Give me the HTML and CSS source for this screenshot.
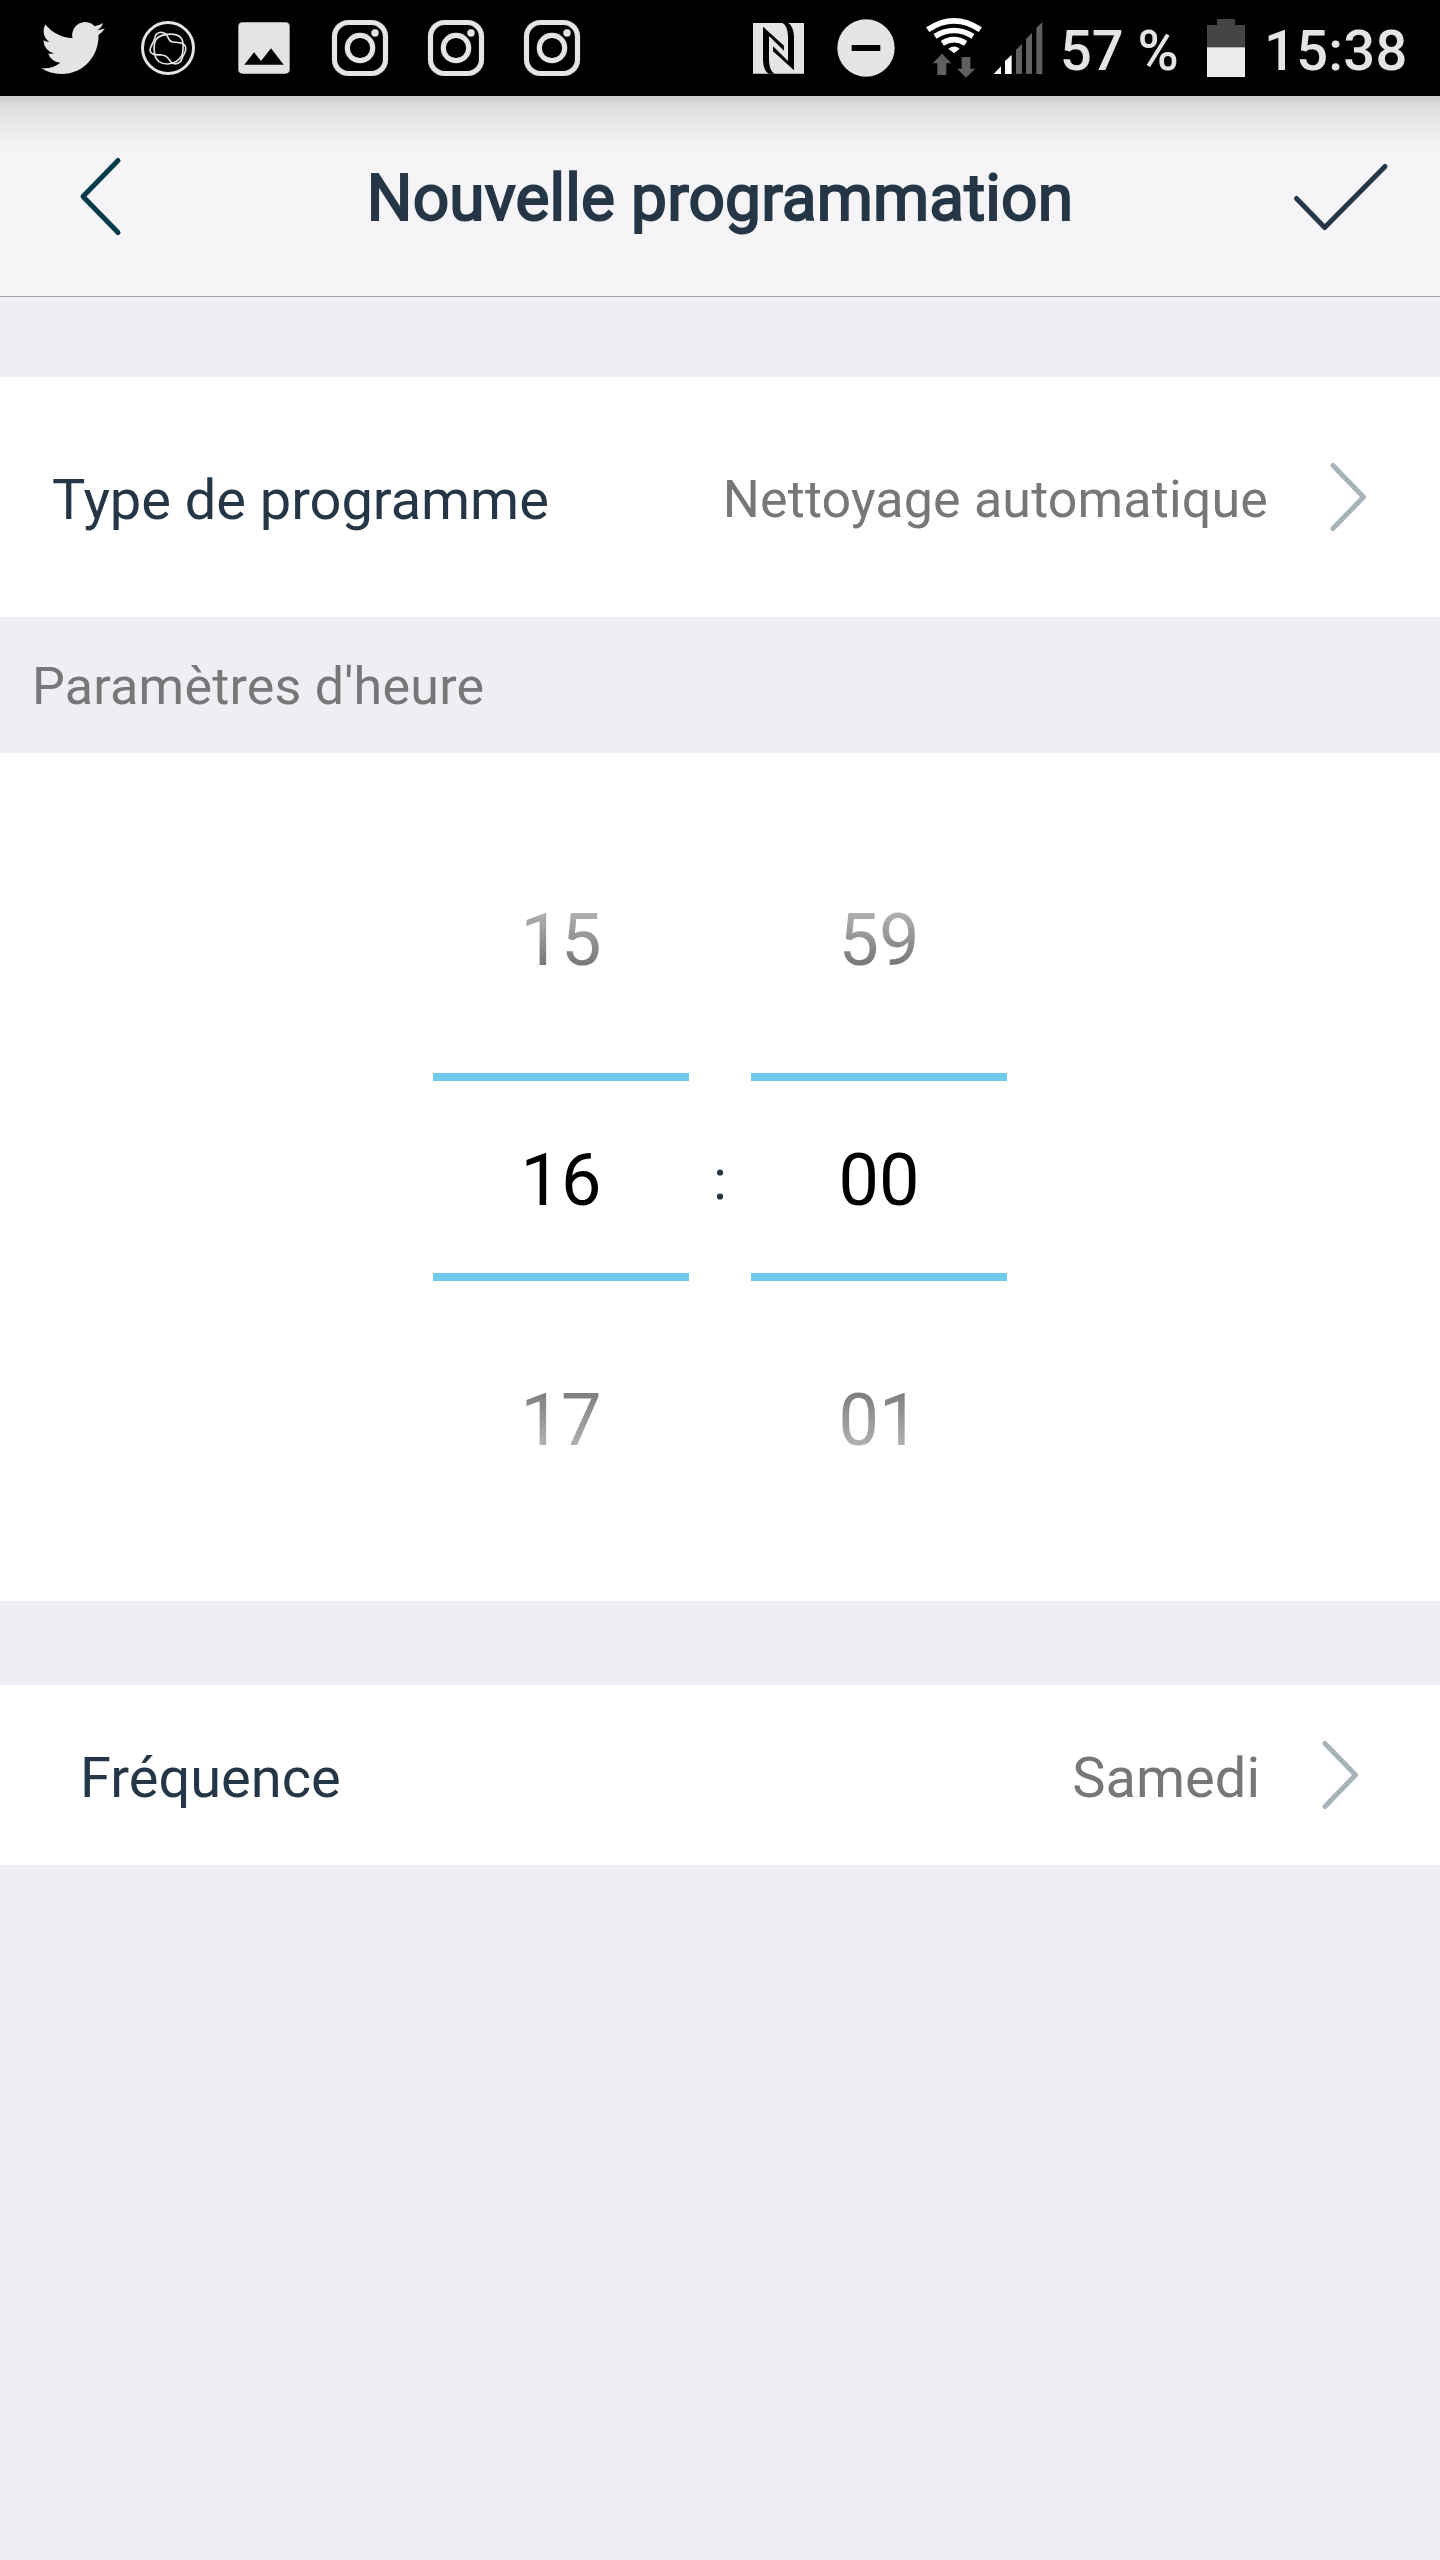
FILE: index.html
```html
<!DOCTYPE html>
<html lang="fr">
<head>
<meta charset="utf-8">
<title>Nouvelle programmation</title>
<link rel="stylesheet" href="styles.css">
</head>
<body>
<div class="status">
  <div class="notifications">
    <svg width="96" height="96" viewBox="24 0 96 96"><path fill="#e4e4e4" transform="translate(41 16) scale(2.667)" d="M23.953 4.57a10 10 0 01-2.825.775 4.958 4.958 0 002.163-2.723c-.951.555-2.005.959-3.127 1.184a4.92 4.92 0 00-8.384 4.482C7.69 8.095 4.067 6.13 1.64 3.162a4.822 4.822 0 00-.666 2.475c0 1.71.87 3.213 2.188 4.096a4.904 4.904 0 01-2.228-.616v.06a4.923 4.923 0 003.946 4.827 4.996 4.996 0 01-2.212.085 4.936 4.936 0 004.604 3.417 9.867 9.867 0 01-6.102 2.105c-.39 0-.779-.023-1.17-.067a13.995 13.995 0 007.557 2.209c9.053 0 13.998-7.496 13.998-13.985 0-.21 0-.42-.015-.63A9.935 9.935 0 0024 4.59z"/></svg>
    <svg width="96" height="96" viewBox="360 0 288 288"><g fill="none" stroke="#e4e4e4"><circle cx="504" cy="144" r="76.500" stroke-width="9"/><path stroke-width="5" d="M465 112C468 96 488 92 499 104C507 114 506 125 518 126C535 127 554 128 557 142C560 158 549 162 545 178C538 194 520 195 512 185C502 172 500 166 484 165C464 164 452 164 450 152C450 136 461 132 465 112Z"/><path stroke-width="5" d="M464 128C468 112 482 105 500 103C524 100 544 106 548 124C551 140 549 152 547 164C538 182 524 191 502 192C482 192 468 182 464 164C461 150 461 140 464 128Z"/></g></svg>
    <svg width="96" height="96" viewBox="648 0 288 288"><path fill="#e4e4e4" fill-rule="evenodd" d="M728 67H856Q869 67 869 80V208Q869 221 856 221H728Q715 221 715 208V80Q715 67 728 67ZM733 194H851L813 145L783 183L762 157Z"/></svg>
    <svg width="96" height="96" viewBox="0 0 96 96"><use href="#camera"/></svg>
    <svg width="96" height="96" viewBox="0 0 96 96"><use href="#camera"/></svg>
    <svg width="96" height="96" viewBox="0 0 96 96"><g id="camera"><rect x="22.500" y="22.500" width="51" height="51" rx="14" fill="none" stroke="#e4e4e4" stroke-width="5.200"/><circle cx="48" cy="48" r="12.700" fill="none" stroke="#e4e4e4" stroke-width="5.200"/><circle cx="63" cy="33" r="3.700" fill="#e4e4e4"/></g></svg>
  </div>
  <div class="system">
    <svg width="88" height="96" viewBox="12 0 264 288"><path fill="#e4e4e4" d="M69 69H222V221H69Z"/><path d="M99 80L162 137V152L117 108V180Q118 214 134 221H116Q100 212 99 180ZM192 211L129 154V139L174 183V111Q173 77 157 69H175Q191 79 192 111Z"/></svg>
    <svg width="88" height="96" viewBox="276 0 264 288"><circle cx="408" cy="144" r="86" fill="#e4e4e4"/><path d="M365 135H451V153H365Z"/></svg>
    <svg width="80" height="96" viewBox="540 0 240 288"><g fill="none" stroke="#fff" stroke-width="17"><path d="M593 89Q672 36 751 89"/><path d="M615 109Q672 74 729 109"/><path d="M637 130Q672 108 707 130"/></g><path fill="#fff" d="M655 146Q672 133 689 146L672 160Z"/><path fill="#606060" d="M636 161L664 190H649V225H622V190H608ZM695 171H721V206H736L708 233L681 206H695Z"/></svg>
    <svg width="56" height="96" viewBox="780 0 168 288"><path fill="#fff" d="M791 222L813 199V222ZM825 222V183L845 165V222Z"/><path fill="#606060" d="M858 222V149L876 131V222ZM888 222V117L906 98V222ZM919 222V84L937 66V222Z"/></svg>
    <span class="percent">57 %</span>
    <svg width="48" height="96" viewBox="486 0 144 288"><path fill="#444" d="M531 57H585V75H615V142H501V75H531Z"/><path fill="#ebebeb" d="M501 142H615V231H501Z"/></svg>
    <span class="clock">15:38</span>
  </div>
</div>
<header class="header">
  <svg width="48" height="88" viewBox="76 152 48 88"><path fill="none" stroke="#053c4b" stroke-width="5" stroke-linecap="round" stroke-linejoin="round" d="M118 160.500L83 196.500L118 232.500"/></svg>
  <h1 class="title">Nouvelle programmation</h1>
  <svg width="104" height="80" viewBox="1288 156 104 80"><path fill="none" stroke="#253746" stroke-width="5" stroke-linecap="round" stroke-linejoin="round" d="M1296.500 198.500L1324.700 227.500L1385 166.500"/></svg>
</header>
<main>
  <section class="row type">
    <span class="label">Type de programme</span>
    <span class="value">Nettoyage automatique</span>
    <svg class="chevron" viewBox="0 0 40 72"><path d="M5 4.500L35.500 36L5 67.500"/></svg>
  </section>
  <h2 class="heading">Paramètres d'heure</h2>
  <section class="picker">
    <div class="wheel"><span class="item before">15</span><span class="item current">16</span><span class="item after">17</span></div>
    <span class="colon">:</span>
    <div class="wheel"><span class="item before">59</span><span class="item current">00</span><span class="item after">01</span></div>
  </section>
  <section class="row frequency">
    <span class="label">Fréquence</span>
    <span class="value">Samedi</span>
    <svg class="chevron" viewBox="0 0 40 72"><path d="M5 4.500L35.500 36L5 67.500"/></svg>
  </section>
</main>
</body>
</html>
```
FILE: styles.css
```css
* { box-sizing: border-box; }
body {
  margin: 0;
  width: 1440px;
  min-height: 2560px;
  background: #efeef4;
  font-family: Roboto, sans-serif;
  color: #253746;
}
svg { display: block; flex: none; }

.status {
  display: flex;
  justify-content: space-between;
  height: 96px;
  padding: 0 32px 0 24px;
  background: #000;
  color: #e4e4e4;
  font-size: 56px;
  font-weight: 500;
  line-height: 102px;
  white-space: nowrap;
}
.notifications, .system { display: flex; height: 96px; }
.system { width: 674px; }
.percent { width: 140px; padding-left: 14px; margin-right: 16px; }
.clock { padding-left: 14px; letter-spacing: .3px; }

.header {
  display: flex;
  align-items: center;
  justify-content: space-between;
  height: 201px;
  padding: 0 48px 0 76px;
  border-bottom: 1px solid #a3a3a5;
  background: linear-gradient(#d0d0d0 0, #d0d0d0 4px, #dadadb 7px, #e6e6e7 22px, #f5f5f8 54px);
}
.title {
  margin: 0;
  padding: 6px 0 0 28px;
  font-size: 64px;
  font-weight: 400;
  line-height: 80px;
  letter-spacing: .15px;
  white-space: nowrap;
  -webkit-text-stroke: 2px #253746;
}

.row { display: flex; align-items: center; background: #fff; }
.type { height: 240px; margin-top: 80px; padding: 0 72px 0 52px; }
.frequency { height: 180px; margin-top: 84px; padding: 0 80px; }
.label { padding-top: 6px; font-size: 56px; }
.type .label { letter-spacing: -.05px; }
.value { margin-left: auto; padding-top: 6px; color: #777; font-size: 56px; }
.type .value { font-size: 52px; letter-spacing: .15px; padding-top: 5px; }
.chevron { width: 40px; height: 72px; margin-left: 60px; }
.chevron path {
  fill: none;
  stroke: #a8b2b9;
  stroke-width: 5;
  stroke-linecap: round;
  stroke-linejoin: round;
}

.heading {
  height: 136px;
  margin: 0;
  padding: 2px 0 0 32px;
  color: #777;
  font-size: 52px;
  font-weight: 400;
  line-height: 136px;
  letter-spacing: .22px;
}

.picker {
  display: flex;
  justify-content: center;
  align-items: center;
  height: 848px;
  background: #fff;
}
.wheel { width: 256px; text-align: center; font-size: 72px; }
.item { display: block; height: 208px; line-height: 208px; }
.before {
  color: #777;
  line-height: 152px;
  -webkit-mask-image: linear-gradient(rgba(0,0,0,.58) 48px, #000 100px);
  mask-image: linear-gradient(rgba(0,0,0,.58) 48px, #000 100px);
}
.current {
  border-top: 8px solid #6fcaec;
  border-bottom: 8px solid #6fcaec;
  line-height: 200px;
  color: #000;
}
.after {
  color: #777;
  line-height: 280px;
  -webkit-mask-image: linear-gradient(rgba(0,0,0,.94) 112px, rgba(0,0,0,.58) 164px);
  mask-image: linear-gradient(rgba(0,0,0,.94) 112px, rgba(0,0,0,.58) 164px);
}
.colon { width: 62px; text-align: center; font-size: 56px; padding-top: 6px; }
```
